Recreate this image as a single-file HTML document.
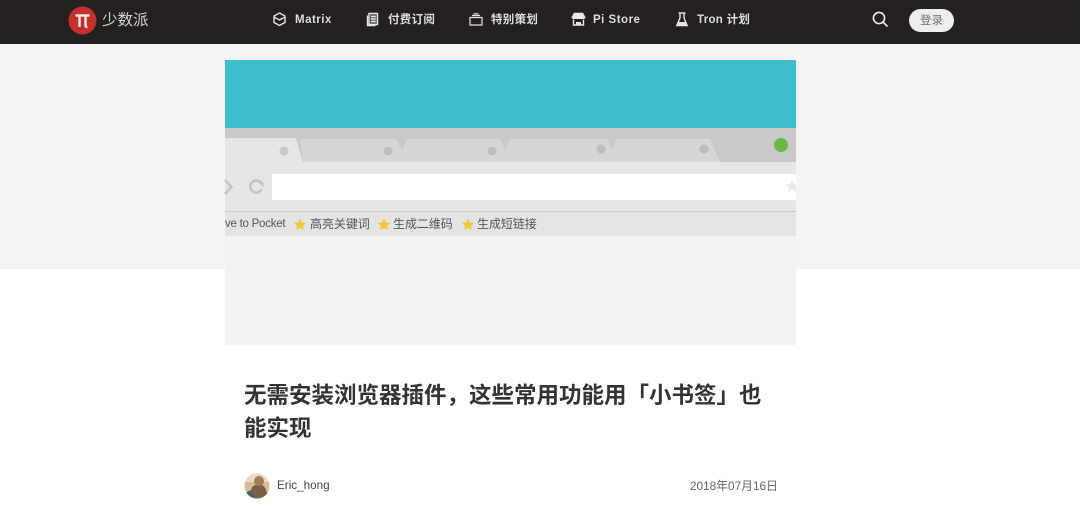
<!DOCTYPE html>
<html lang="zh">
<head>
<meta charset="utf-8">
<title>少数派</title>
<style>
*{box-sizing:border-box}
html,body{margin:0;padding:0;width:1080px;height:516px;overflow:hidden;background:#fff;font-family:"Liberation Sans","Noto Sans CJK SC",sans-serif}
.abs{position:absolute;white-space:nowrap}
#top{position:absolute;left:0;top:0;width:1080px;height:44px;background:#242020}
#gray{position:absolute;left:0;top:44px;width:1080px;height:225px;background:#f4f4f4}
.nav{color:#dedede;font-size:11.5px;font-weight:700;letter-spacing:.5px;line-height:16px;top:12px}
svg{position:absolute;overflow:visible}
h1{position:absolute;left:244px;top:379px;width:530px;margin:0;font-size:22.5px;line-height:33px;font-weight:700;color:#333;letter-spacing:0}
</style>
</head>
<body>
<div id="top"></div>
<div id="gray"></div>

<!-- logo -->
<svg style="left:68px;top:6px" width="29" height="29" viewBox="0 0 29 29">
<circle cx="14.5" cy="14.5" r="14" fill="#c5302f"/>
<path d="M7.5 9.5H21.5M11.5 9.5V21M17.5 9.5V19.5Q17.5 21 19.5 21" fill="none" stroke="#f3e9e6" stroke-width="2.4"/>
</svg>
<div class="abs" style="left:102px;top:10px;color:#d4d4d4;font-size:15.5px;line-height:22px">少数派</div>

<!-- nav -->
<svg style="left:272px;top:12px" width="15" height="15" viewBox="0 0 15 15" fill="none" stroke="#e6e6e6" stroke-width="1.4">
<path d="M7.5 1L13 4V10.5L7.5 13.5L2 10.5V4Z"/><path d="M2 5L7.5 8L13 5"/>
</svg>
<div class="abs nav" style="left:295px">Matrix</div>

<svg style="left:366px;top:12px" width="14" height="15" viewBox="0 0 14 15" fill="none" stroke="#e6e6e6" stroke-width="1.4">
<path d="M3 1.5H11.5V12.500H3Z" fill="#e6e6e6" fill-opacity=".25"/><path d="M1.5 3.500V13.500H9.500"/><path d="M5 4.500H9.800M5 7H9.800M5 9.500H9.800"/>
</svg>
<div class="abs nav" style="left:388px;letter-spacing:.3px">付费订阅</div>

<svg style="left:469px;top:13px" width="14" height="13" viewBox="0 0 14 13" fill="none" stroke="#e6e6e6" stroke-width="1.2">
<path d="M1 4.500H13V12H1Z"/><path d="M3 2.500H11M4.500 .8H9.500"/>
</svg>
<div class="abs nav" style="left:491px;letter-spacing:.3px">特别策划</div>

<svg style="left:571px;top:12px" width="15" height="14" viewBox="0 0 15 14">
<path d="M3 .8H12L14.600 5.500Q14 7 12 7H3Q1 7 .4 5.500Z" fill="#e6e6e6"/>
<path d="M2.500 7.500V13H12.500V7.500" fill="none" stroke="#e6e6e6" stroke-width="1.4"/>
<path d="M5 13V10H10V13" fill="#e6e6e6"/>
</svg>
<div class="abs nav" style="left:593px">Pi Store</div>

<svg style="left:675px;top:12px" width="14" height="15" viewBox="0 0 14 15">
<path d="M3.500 1H10.500" stroke="#e6e6e6" stroke-width="1.4"/>
<path d="M5 1.500V6L1.800 13.500H12.200L9 6V1.500" fill="none" stroke="#e6e6e6" stroke-width="1.4"/>
<path d="M3.600 10H10.400L12 14H2Z" fill="#e6e6e6"/>
</svg>
<div class="abs nav" style="left:697px;letter-spacing:.3px">Tron 计划</div>

<!-- search -->
<svg style="left:872px;top:11px" width="17" height="17" viewBox="0 0 17 17" fill="none" stroke="#efefef" stroke-width="1.6">
<circle cx="7" cy="7" r="5.600"/><path d="M11 11L15.500 15.500"/>
</svg>
<div class="abs" style="left:909px;top:9px;width:45px;height:23px;border-radius:12px;background:#eeeeec;color:#6f6f6f;font-size:11.5px;line-height:24px;text-align:center">登录</div>

<!-- hero -->
<svg style="left:225px;top:60px" width="571" height="285" viewBox="0 0 571 285">
<rect width="571" height="285" fill="#f3f3f4"/>
<rect width="571" height="68" fill="#3cbfca"/>
<rect y="68" width="571" height="34" fill="#c9c8ca"/>
<path d="M75 79H172L177 90L182 79H275L280 90L285 79H382L387 90L392 79H485L495 102H78Z" fill="#d6d5d7"/>
<path d="M0 78H71L78 102H0Z" fill="#e6e5e7"/>
<rect y="102" width="571" height="49" fill="#e6e5e7"/>
<rect x="47" y="114" width="524" height="26" fill="#fff"/>
<path d="M0 120L6.500 127L0 134" fill="none" stroke="#c4c4c6" stroke-width="2.600"/>
<path d="M36.500 123.500A6 6 0 1 0 36.500 129.500" fill="none" stroke="#c4c4c6" stroke-width="2.600"/>
<path d="M33 122H38.500V127Z" fill="#c4c4c6"/>
<path d="M567 120L569 124.500H571V131.500L567 129.500L563 132L564 127L560.500 124.500H565Z" fill="#e8e8ea"/>
<rect y="151" width="571" height="1" fill="#c8c8ca"/>
<rect y="152" width="571" height="24" fill="#e4e3e5"/>
<circle cx="59" cy="91" r="4.500" fill="#c9c8ca"/>
<circle cx="163" cy="91" r="4.500" fill="#bdbcbe"/>
<circle cx="267" cy="91" r="4.500" fill="#bdbcbe"/>
<circle cx="376" cy="89" r="4.500" fill="#bdbcbe"/>
<circle cx="479" cy="89" r="4.500" fill="#bdbcbe"/>
<circle cx="556" cy="85" r="7" fill="#6db64a"/>
<path d="M75 158.500L76.800 162.500L81 163L78 166L78.800 170L75 168L71.200 170L72 166L69 163L73.200 162.500Z" fill="#f5c733"/>
<path d="M159 158.500L160.800 162.500L165 163L162 166L162.800 170L159 168L155.200 170L156 166L153 163L157.200 162.500Z" fill="#f5c733"/>
<path d="M243 158.500L244.800 162.500L249 163L246 166L246.800 170L243 168L239.200 170L240 166L237 163L241.200 162.500Z" fill="#f5c733"/>
</svg>
<div class="abs" style="left:225px;top:216px;color:#555;font-size:11.500px;line-height:16px;letter-spacing:-.25px">ve to Pocket</div>
<div class="abs" style="left:310px;top:215px;color:#555;font-size:12px;line-height:18px;letter-spacing:-.05px">高亮关键词</div>
<div class="abs" style="left:393px;top:215px;color:#555;font-size:12px;line-height:18px;letter-spacing:-.05px">生成二维码</div>
<div class="abs" style="left:477px;top:215px;color:#555;font-size:12px;line-height:18px;letter-spacing:-.05px">生成短链接</div>

<!-- title -->
<h1>无需安装浏览器插件，这些常用功能用「小书签」也能实现</h1>

<!-- author -->
<svg style="left:244px;top:473px" width="26" height="26" viewBox="0 0 26 26">
<defs><clipPath id="av"><circle cx="13" cy="13" r="12.500"/></clipPath></defs>
<g clip-path="url(#av)">
<rect width="26" height="26" fill="#d8bd92"/>
<rect width="26" height="9" fill="#e8dcc6"/>
<rect y="19" width="26" height="7" fill="#b08a58"/>
<path d="M7 26V17Q8 12 13 12H18Q23 14 23 26Z" fill="#7a5f45"/>
<path d="M3 26V19Q6 16 9 19V26Z" fill="#4d5f6d"/>
<circle cx="15" cy="8" r="5" fill="#a37b55"/>
</g>
</svg>
<div class="abs" style="left:277px;top:478px;color:#444;font-size:11.700px;line-height:16px">Eric_hong</div>
<div class="abs" style="left:690px;top:478px;color:#666;font-size:11.800px;line-height:17px">2018年07月16日</div>
</body>
</html>
